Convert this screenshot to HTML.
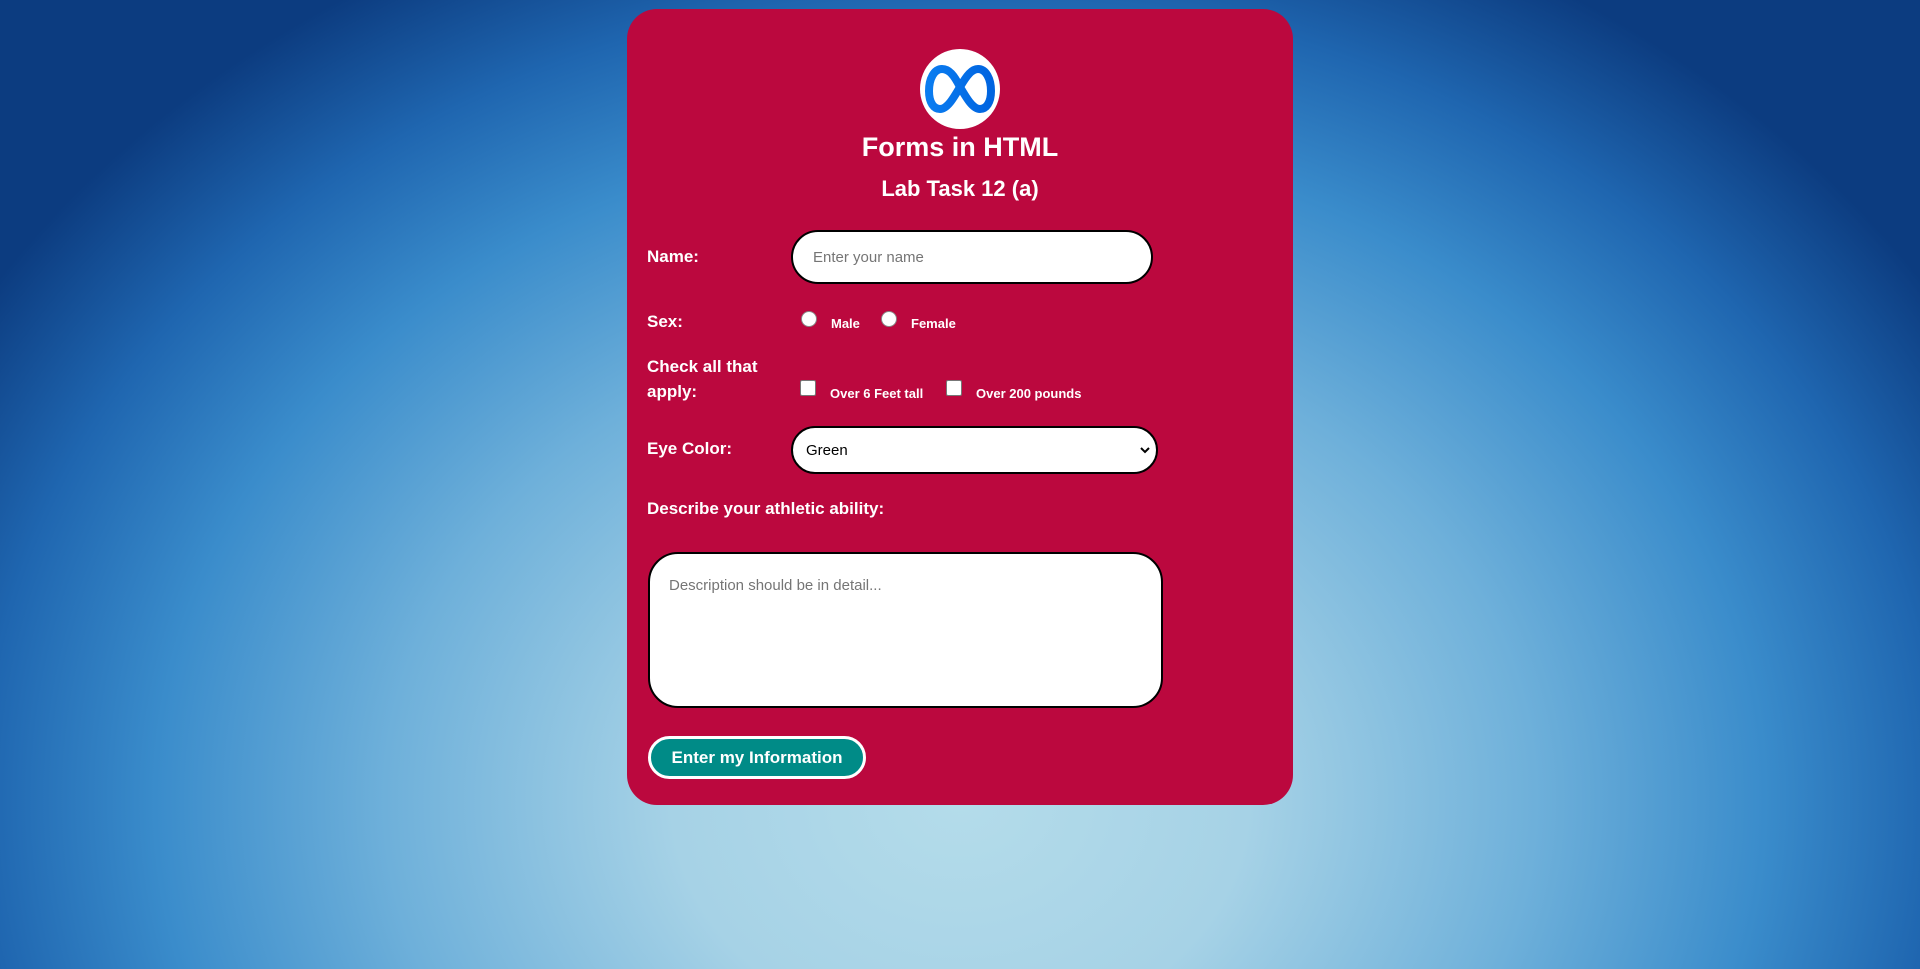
<!DOCTYPE html>
<html><head><meta charset="utf-8"><style>
html,body{margin:0;padding:0;width:1920px;height:969px;overflow:hidden}
body{background:radial-gradient(ellipse 1150px 950px at 960px 800px,#b4dcea 0%,#a6d2e6 25%,#6eb0da 50%,#3a8ccb 70%,#1f66b0 85%,#0c3c80 100%);font-family:"Liberation Sans",sans-serif;position:relative}
.card{position:absolute;left:627px;top:9px;width:666px;height:796px;background:#bb083e;border-radius:30px}
.a{position:absolute;color:#fff;font-weight:bold;white-space:nowrap}
.lbl{font-size:17px}
.small{font-size:13px}
.logo{position:absolute;left:920px;top:49px;width:80px;height:80px;border-radius:50%;background:#fff}
.inp{position:absolute;background:#fff;border:2px solid #000;box-sizing:border-box}
.radio{position:absolute;width:16px;height:16px;border-radius:50%;background:#fff;border:1px solid #888;box-sizing:border-box}
.cb{position:absolute;width:16px;height:16px;background:#fff;border:1px solid #777;box-sizing:border-box;border-radius:2px}
</style></head><body>
<div class="card"></div>
<div class="logo"><svg width="80" height="80" viewBox="0 0 80 80"><defs><linearGradient id="g" x1="0" x2="1"><stop offset="0" stop-color="#0a7cf0"/><stop offset="1" stop-color="#0064e0"/></linearGradient></defs><path d="M40 38 C34 26 29 20 22 20 C14 20 9 30 9 42 C9 54 14 60 20 60 C27 60 33 50 40 38 C47 26 52 20 58 20 C66 20 71 30 71 42 C71 54 66 60 60 60 C53 60 47 50 40 38" fill="none" stroke="url(#g)" stroke-width="8" stroke-linecap="round"/></svg></div>
<div class="a" style="left:0;width:1920px;text-align:center;top:132px;font-size:27px">Forms in HTML</div>
<div class="a" style="left:0;width:1920px;text-align:center;top:176px;font-size:22px">Lab Task 12 (a)</div>
<div class="a lbl" style="left:647px;top:247px">Name:</div>
<div class="inp" style="left:791px;top:230px;width:362px;height:54px;border-radius:27px"><span style="position:absolute;left:20px;top:17px;color:#757575;font-size:15px;font-weight:normal">Enter your name</span></div>
<div class="a lbl" style="left:647px;top:312px">Sex:</div>
<div class="radio" style="left:801px;top:311px"></div>
<div class="a small" style="left:831px;top:316px">Male</div>
<div class="radio" style="left:881px;top:311px"></div>
<div class="a small" style="left:911px;top:316px">Female</div>
<div class="a lbl" style="left:647px;top:357px">Check all that</div>
<div class="a lbl" style="left:647px;top:382px">apply:</div>
<div class="cb" style="left:800px;top:380px"></div>
<div class="a small" style="left:830px;top:386px">Over 6 Feet tall</div>
<div class="cb" style="left:946px;top:380px"></div>
<div class="a small" style="left:976px;top:386px">Over 200 pounds</div>
<div class="a lbl" style="left:647px;top:439px">Eye Color:</div>
<div class="inp" style="left:791px;top:426px;width:367px;height:48px;border-radius:24px"><span style="position:absolute;left:13px;top:14px;color:#000;font-size:15px">Green</span><svg style="position:absolute;right:6px;top:18px" width="10" height="8" viewBox="0 0 10 8"><path d="M1 2 L5 6 L9 2" fill="none" stroke="#000" stroke-width="2"/></svg></div>
<div class="a lbl" style="left:647px;top:499px">Describe your athletic ability:</div>
<div class="inp" style="left:648px;top:552px;width:515px;height:156px;border-radius:30px"><span style="position:absolute;left:19px;top:23px;color:#757575;font-size:15px">Description should be in detail...</span></div>
<div style="position:absolute;left:648px;top:736px;width:218px;height:43px;box-sizing:border-box;border:3px solid #fff;border-radius:22px;background:#008b87;color:#fff;font-weight:bold;font-size:17px;text-align:center;line-height:37px">Enter my Information</div>
</body></html>
